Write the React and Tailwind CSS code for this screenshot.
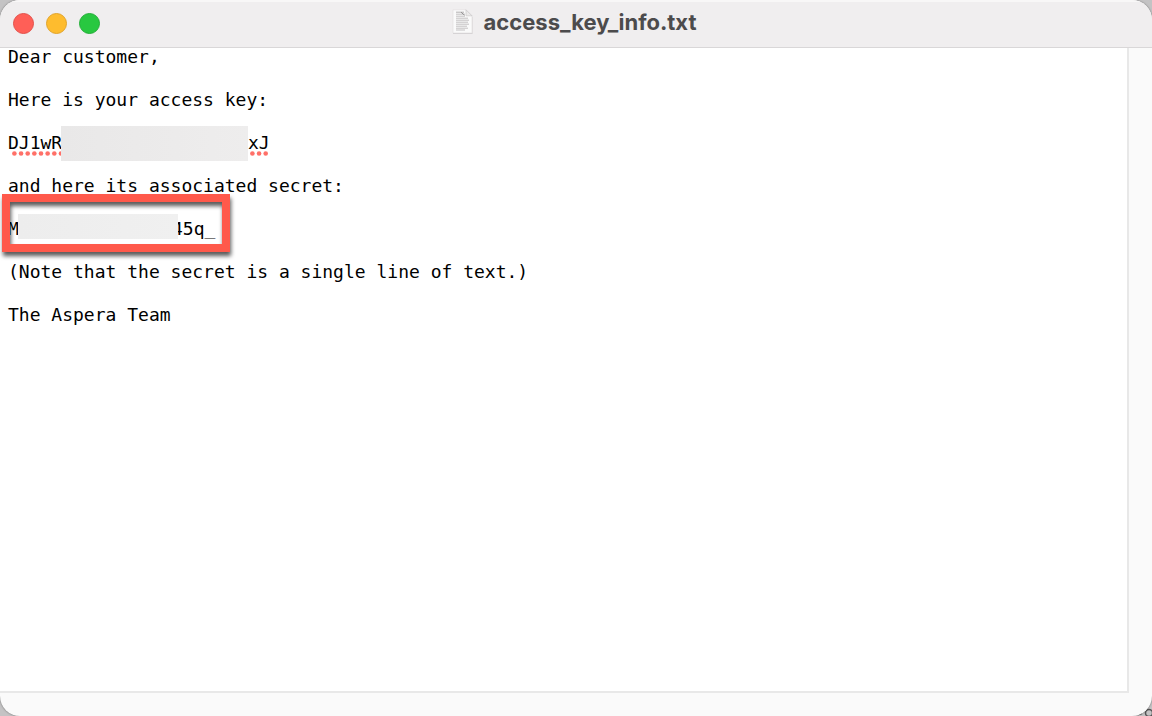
import React from "react";

const lights = [
  { label: "Close", color: "bg-[#ff5f57] border-[#e2504a]" },
  { label: "Minimize", color: "bg-[#febc2e] border-[#e0a32a]" },
  { label: "Zoom", color: "bg-[#28c840] border-[#24ae38]" },
];

function FileIcon() {
  return (
    <svg width="22" height="26" viewBox="0 0 22 26" aria-hidden="true">
      <path d="M1 2h13.5l6 6v17H1z" fill="#cfcdce" />
      <path d="M1 .8h13l6 6V24H1z" fill="#fafafa" stroke="#e2e0e1" strokeWidth=".7" />
      <path d="M14 .8v6h6z" fill="#ebeaea" stroke="#c4c2c3" strokeWidth=".6" />
      <g stroke="#c2c0c1" strokeWidth="1" fill="none">
        <path d="M4 5.2h9M4 7.2h9M4 9.2h12M4 11.2h13M4 13.2h12M4 15.2h13M4 17.2h11M4 19.2h12M4 21h9" />
        <path d="M4 3.2h8" stroke="#b2b0b1" />
        <path d="M9 3.2l3.5 3" stroke="#929091" />
      </g>
    </svg>
  );
}

function SpellingDots({ count, className }) {
  return (
    <svg
      className={`absolute top-full ${className}`}
      width={count * 7}
      height="5"
      aria-hidden="true"
    >
      {Array.from({ length: count }, (_, i) => (
        <circle key={i} cx={2.4 + i * 6.65} cy="2.5" r="2.3" fill="#ff7068" />
      ))}
    </svg>
  );
}

export default function App() {
  return (
    <div className="relative h-screen overflow-hidden bg-[#c4c3c4]">
      <svg className="absolute right-0 bottom-0" width="16" height="16" aria-hidden="true">
        <circle cx="13" cy="13" r="3.5" fill="none" stroke="#555" strokeWidth="1.5" />
        <path d="M2 14.5l4-1" stroke="#555" strokeWidth="1.5" />
      </svg>
      <div className="relative flex h-full flex-col overflow-hidden rounded-[20px] bg-[#fafafa] shadow-[0_0_2px_rgba(0,0,0,0.5)]">
        <header className="relative flex h-12 shrink-0 items-center justify-center border-b border-[#d9d7d8] bg-[#f0eeef] pr-1 pb-1 shadow-[inset_0_2px_0_#f8f7f7]">
          <div className="absolute top-3 left-3 flex gap-3 pt-px pl-px">
            {lights.map((l) => (
              <button
                key={l.label}
                type="button"
                aria-label={l.label}
                className={`size-[21px] rounded-full border ${l.color}`}
              />
            ))}
          </div>
          <h1 className="flex items-center gap-2.5 font-[Inter,sans-serif] text-[22px] leading-7 font-bold text-[#4c4b4c]">
            <FileIcon />
            access_key_info.txt
          </h1>
        </header>
        <main className="mr-[23px] mb-[23px] flex flex-1 flex-col gap-[26px] border-r-2 border-b-2 border-[#e8e8e8] bg-white pl-2 font-['DejaVu_Sans_Mono',monospace] text-[18px] leading-[17px] whitespace-pre text-black">
          <p>Dear customer,</p>
          <p>Here is your access key:</p>
          <p className="relative flex">
            <span className="relative w-60">
              DJ1wR
              <SpellingDots count={8} className="left-1" />
            </span>
            <span className="relative">
              xJ
              <SpellingDots count={3} className="left-0.5" />
            </span>
            <span className="absolute -top-2 left-[53px] h-[35px] w-[187px] bg-linear-to-r from-[#e9e8e8] to-[#eeeded]" />
          </p>
          <p>and here its associated secret:</p>
          <p className="relative flex">
            <span className="w-[164px]">M</span>
            <span>45q_</span>
            <span className="absolute -top-1.5 left-2.5 h-[25px] w-40 bg-linear-to-r from-[#ededed] to-[#f0f0f0]" />
            <span className="absolute -top-[26px] -left-1.5 h-[58px] w-[228px] border-8 border-[#ff594b] drop-shadow-[1px_4px_2px_rgba(0,0,0,0.65)]" />
          </p>
          <p>(Note that the secret is a single line of text.)</p>
          <p>The Aspera Team</p>
        </main>
      </div>
    </div>
  );
}
